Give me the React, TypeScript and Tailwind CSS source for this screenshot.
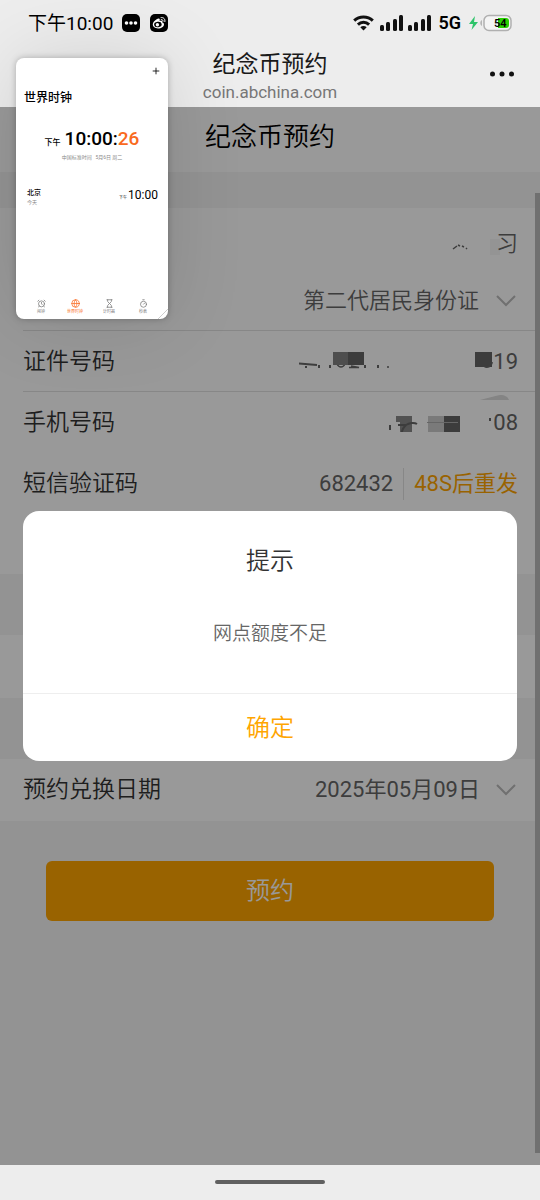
import type { ReactNode } from 'react';
import { AlarmClock, Globe, Hourglass, Timer, Plus } from 'lucide-react';

function SignalBars() {
  return (
    <svg className="h-4 w-6" viewBox="0 0 24 16" fill="#111">
      <rect x="0" y="10" width="4" height="6" rx="1.5" />
      <rect x="6" y="7" width="4" height="9" rx="1.5" />
      <rect x="13" y="4" width="4" height="12" rx="1.5" />
      <rect x="19" y="0" width="4" height="16" rx="1.5" />
    </svg>
  );
}

function StatusBar() {
  return (
    <div className="flex h-[46px] items-center justify-between pr-7 pl-7">
      <div className="flex items-center text-black">
        <span className="pt-0.5 text-[19px]">下午10:00</span>
        <svg className="ml-[9px] h-[18px] w-[18px]" viewBox="0 0 18 18">
          <rect width="18" height="18" rx="5" fill="#000" />
          <circle cx="4.5" cy="9" r="1.8" fill="#fff" />
          <circle cx="9" cy="9" r="1.8" fill="#fff" />
          <circle cx="13.5" cy="9" r="1.8" fill="#fff" />
        </svg>
        <svg className="ml-[10px] h-[18px] w-[18px]" viewBox="0 0 18 18" fill="none">
          <rect width="18" height="18" rx="5" fill="#000" />
          <path
            d="M8.6 4.4c-2.4.4-5.8 3.4-5.8 6.2 0 2.4 2.4 3.8 5.2 3.8 3.4 0 6-2 6-4 0-1.2-.8-1.8-1.9-2.1.5-1.5-.6-2-2.6-1.2.6-1.5.4-2.9-.9-2.7z"
            fill="#fff"
          />
          <ellipse cx="7.9" cy="10.5" rx="3.8" ry="2.7" fill="#000" transform="rotate(-8 8 10.5)" />
          <circle cx="7.4" cy="10.8" r="1.7" fill="#fff" />
          <path d="M11 3.6c2.6-.5 4.4 1.4 3.9 4M11.2 5.6c1.3-.2 2 .5 1.8 1.7" stroke="#fff" strokeLinecap="round" />
        </svg>
      </div>

      <div className="flex items-center">
        <svg className="h-4 w-[21px]" viewBox="0 0 21 16" fill="none" stroke="#111" strokeWidth="3">
          <path d="M1.2 5.6C6.4.7 14.6.7 19.8 5.6" />
          <path d="M4.9 9.6c3.2-3 8-3 11.2 0" />
          <path d="M7.3 12.3c1.9-1.6 4.5-1.6 6.4 0L10.5 15.6z" fill="#111" stroke="none" />
        </svg>
        <div className="ml-[6px] flex gap-1">
          <SignalBars />
          <SignalBars />
        </div>
        <span className="ml-[6px] text-lg font-semibold text-black">5G</span>
        <svg className="ml-[8px] h-[18px] w-[43px]" viewBox="0 0 43 18" fill="none">
          <path d="M6 2 0 10h4l-1.5 6L9 8H5z" fill="#2dc46a" />
          <path d="M13 6v6c-2.3-1-2.3-5 0-6z" fill="#b5b5b5" />
          <rect x="15" y="1.5" width="27" height="15" rx="5" fill="#f4f4f4" stroke="#b0b0b0" strokeWidth="1.5" />
          <path d="M29 4h8a3 3 0 0 1 3 3v4a3 3 0 0 1-3 3h-8z" fill="#28d000" />
          <text x="25" y="13" fontSize="11" fontWeight="600" fill="#000">
            54
          </text>
        </svg>
      </div>
    </div>
  );
}

function Header() {
  return (
    <header className="relative flex h-[61px] flex-col items-center pt-[5px]">
      <h1 className="text-[23px] leading-7 text-[#1a1a1a]">纪念币预约</h1>
      <p className="text-[17px] leading-[26px] text-[#777]">coin.abchina.com</p>
      <button aria-label="更多" className="absolute top-6 right-[26px]">
        <svg className="h-2 w-6" viewBox="0 0 24 8" fill="#111">
          <circle cx="2.5" cy="4" r="2.5" />
          <circle cx="12" cy="4" r="2.5" />
          <circle cx="21.5" cy="4" r="2.5" />
        </svg>
      </button>
    </header>
  );
}

function Chevron() {
  return (
    <svg className="mr-0.5 ml-4 h-3 w-5" viewBox="0 0 20 12" fill="none" stroke="#bbb" strokeWidth="2">
      <path d="M1 1l9 9 9-9" />
    </svg>
  );
}

function Row({ label, htmlFor, divider, children }: { label?: string; htmlFor?: string; divider?: boolean; children: ReactNode }) {
  return (
    <div
      className={`ml-[23px] flex h-[61px] items-center justify-between border-b pt-0.5 pr-[22px] ${
        divider ? 'border-[#e2e2e2]' : 'border-transparent'
      }`}
    >
      {label && (
        <label htmlFor={htmlFor} className="text-[23px] leading-8 text-[#333]">
          {label}
        </label>
      )}
      <div className="ml-auto flex items-center text-[22px] leading-8 text-[#666]">{children}</div>
    </div>
  );
}

function NameMask() {
  return (
    <svg className="h-6 w-[48px] overflow-visible" viewBox="450 229 48 24" fill="none" stroke="#666" strokeWidth="1.5">
      <path d="M455 250l4-3M460 246l2 1M464 247l2 1M468 249l1 1" />
      <rect x="492" y="240" width="10" height="16" fill="#f7f7f7" stroke="none" />
    </svg>
  );
}

function IdMask() {
  return (
    <svg className="h-5 w-[194px]" viewBox="300 353 194 20" fill="none" stroke="#666" strokeWidth="2">
      <path d="M300 364.5l18 1.5M307 365v4M320 366v3M331 366v3M366 366v3M379 366v3" />
      <path d="M338 365c2 4 6 4 8 0M350 368.5h10l-8-1.5M388 368h2" strokeWidth="1.5" />
      <rect x="334" y="352" width="15" height="14" fill="#828282" stroke="none" />
      <rect x="349" y="352" width="16" height="14" fill="#646464" stroke="none" />
      <rect x="476" y="352" width="17" height="16" fill="#646464" stroke="none" />
      <path d="M485 367c3 2 7 1 8-4" />
    </svg>
  );
}

function PhoneMask() {
  return (
    <svg className="h-14 w-[105px] overflow-visible" viewBox="389 395 105 56" fill="none" stroke="#666" strokeWidth="2">
      <path d="M391 425v5" />
      <rect x="397" y="416" width="16" height="16" fill="#898989" stroke="none" />
      <rect x="429" y="416" width="16" height="16" fill="#cbcbcb" stroke="none" />
      <rect x="445" y="416" width="16" height="16" fill="#646464" stroke="none" />
      <path d="M397 422h4v10h-4z" fill="#fff" stroke="none" />
      <path d="M399 425h8c-2 2-4 4-4 7M407 425c3-2 8-3 11-1" />
      <path d="M428 422.5h31" stroke="#aaa" strokeWidth="1" />
      <path d="M491 418v3" />
      <path d="M481 400c8-2 14-4 20-5 5 0 8 2 9 5z" fill="#dcdcdc" stroke="none" />
    </svg>
  );
}

const tabs = [
  { name: '闹钟', Icon: AlarmClock },
  { name: '世界时钟', Icon: Globe, active: true },
  { name: '计时器', Icon: Hourglass },
  { name: '秒表', Icon: Timer },
];

function ClockWindow() {
  return (
    <aside className="absolute top-[58px] left-4 z-20 flex h-[261px] w-[152px] flex-col overflow-hidden rounded-lg bg-white text-black shadow-[0_0_6px_rgba(0,0,0,0.25),0_0_80px_rgba(0,0,0,0.12)]">
      <button aria-label="添加" className="mt-2 mr-[7px] self-end">
        <Plus size={10} />
      </button>
      <h2 className="mt-3 pl-2 text-xs leading-5 font-medium">世界时钟</h2>
      <div className="mt-5 flex items-baseline justify-center text-[19px] leading-[22px] font-medium">
        <span className="mr-1 text-[8px]">下午</span>
        10:00:<span className="text-[#f96a20]">26</span>
      </div>
      <p className="text-center text-[5px] leading-[6px] whitespace-pre text-[#888]">中国标准时间   5月6日 周二</p>
      <div className="mt-[27px] flex items-center justify-between pr-[10px] pl-[11px]">
        <div>
          <p className="text-[7px] leading-[10px] font-medium">北京</p>
          <p className="text-[5px] leading-2 text-[#888]">今天</p>
        </div>
        <p className="text-xs leading-4">
          <span className="mr-px text-[4px]">下午</span>10:00
        </p>
      </div>
      <nav className="mt-auto mb-[3px] grid grid-cols-4 px-2">
        {tabs.map(({ name, Icon, active }) => (
          <button
            key={name}
            className={`flex flex-col items-center text-[4px] leading-2 ${active ? 'text-[#f96a20]' : 'text-[#777]'}`}
          >
            <Icon size={9} />
            {name}
          </button>
        ))}
      </nav>
      <svg className="absolute right-0 bottom-0 h-[10px] w-[10px]" viewBox="0 0 10 10" stroke="#ccc">
        <path d="M0 10L10 0" />
      </svg>
    </aside>
  );
}

function Dialog() {
  return (
    <div className="absolute inset-0 flex items-center bg-black/40 px-[23px]">
      <div role="dialog" aria-label="提示" className="w-full overflow-hidden rounded-2xl bg-white text-center">
        <h3 className="pt-[34px] text-2xl text-[#333]">提示</h3>
        <p className="pt-[42px] pb-11 text-[19px] leading-[30px] text-[#666]">网点额度不足</p>
        <button className="h-[68px] w-full border-t border-[#eee] text-2xl text-[#ffa500]">确定</button>
      </div>
    </div>
  );
}

export default function App() {
  return (
    <div className="relative flex min-h-screen flex-col overflow-hidden bg-[#ededed] font-[Roboto,'Noto_Sans_CJK_SC',sans-serif]">
      <StatusBar />
      <Header />
      <ClockWindow />

      <main className="relative flex-1 bg-[#f5f5f5] font-[350]">
        <h2 className="bg-white pt-[10px] pb-[15px] text-center text-[26px] leading-10 text-black">纪念币预约</h2>

        <section className="mt-9 bg-white pt-px pb-[60px]">
          <Row>
            <NameMask />
            <span className="pt-2">习</span>
          </Row>
          <Row divider>
            <select aria-label="证件类型" className="appearance-none">
              <option>第二代居民身份证</option>
            </select>
            <Chevron />
          </Row>
          <Row label="证件号码" divider>
            <IdMask />
            <span className="font-normal">19</span>
          </Row>
          <Row label="手机号码">
            <PhoneMask />
            <span className="font-normal">08</span>
          </Row>
          <Row label="短信验证码" htmlFor="sms">
            <input id="sms" defaultValue="682432" className="w-24 pr-[10px] text-right font-normal" />
            <button className="border-l border-[#e2e2e2] pl-[10px] font-normal text-[#ffa500]">48S后重发</button>
          </Row>
        </section>

        <section className="mt-[61px] h-[63px] bg-white" />

        <section className="mt-[61px] bg-white pb-px">
          <Row label="预约兑换日期" htmlFor="date">
            <select id="date" className="appearance-none font-normal">
              <option>2025年05月09日</option>
            </select>
            <Chevron />
          </Row>
        </section>

        <div className="px-[46px] pt-10">
          <button className="h-[60px] w-full rounded-md bg-[#ffa500] text-2xl text-white">预约</button>
        </div>

        <div className="absolute top-[86px] right-0 bottom-3 w-[5px] bg-[#bbb]" />
        <Dialog />
      </main>

      <footer className="flex h-[35px] justify-center pt-[15px]">
        <div className="h-1 w-[110px] rounded-full bg-[#606060]" />
      </footer>
    </div>
  );
}
